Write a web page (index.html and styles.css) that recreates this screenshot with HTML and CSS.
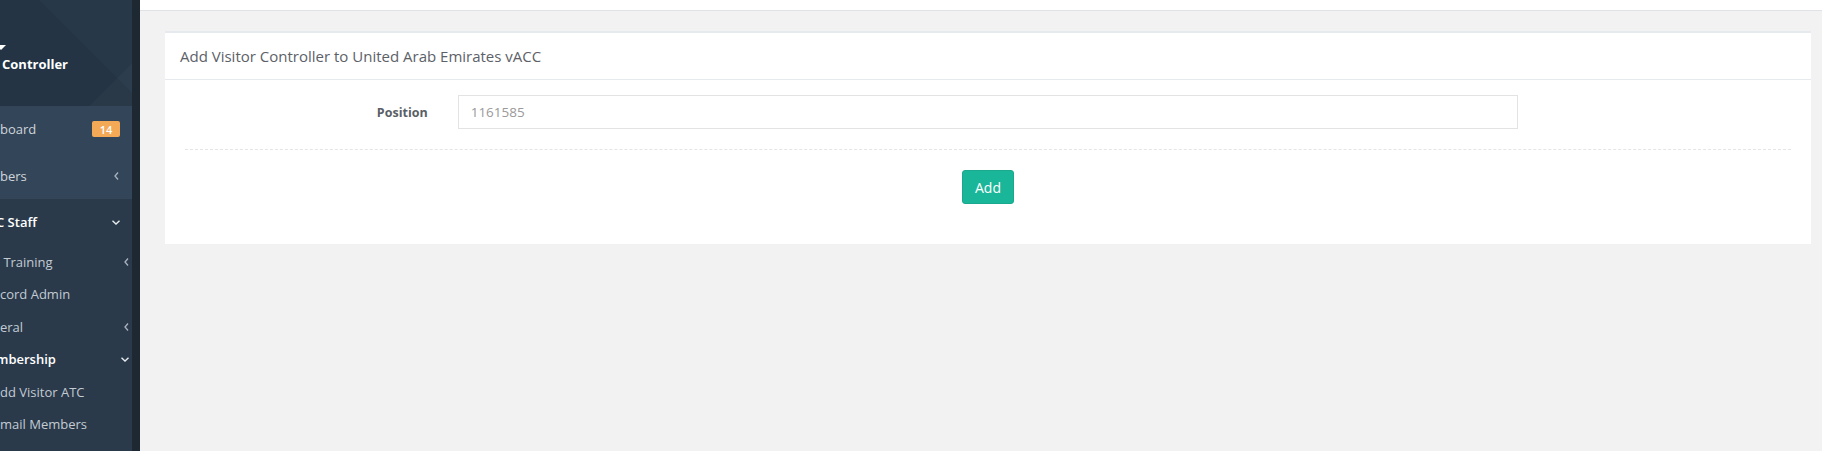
FILE: index.html
```html
<!DOCTYPE html>
<html lang="en">
<head>
<meta charset="utf-8">
<title>Add Visitor Controller</title>
<link rel="stylesheet" href="styles.css">
</head>
<body>
<aside class="sidebar">
  <div class="profile">
    <svg class="profile-caret" width="6" height="5" viewBox="0 0 6 5"><polygon points="-4,0 6,0 1,5" fill="#ffffff"/></svg>
    <div class="profile-name">Controller</div>
  </div>
  <div class="menu-active">
    <div class="menu-row level1">
      <span class="menu-text">board</span>
      <span class="badge">14</span>
    </div>
    <div class="menu-row level1">
      <span class="menu-text">bers</span>
      <svg class="chev-left" width="5" height="8" viewBox="0 0 5 8"><polyline points="4,0.5 1,4 4,7.5" fill="none" stroke="#aab4bf" stroke-width="1.3"/></svg>
    </div>
  </div>
  <div class="menu-row level1 open">
    <span class="menu-text strong cut-c">C Staff</span>
    <svg class="chev-down" width="8" height="5" viewBox="0 0 8 5"><polyline points="0.5,0.8 4,4 7.5,0.8" fill="none" stroke="#e8ecef" stroke-width="1.4"/></svg>
  </div>
  <div class="menu-row level2">
    <span class="menu-text">&nbsp;Training</span>
    <svg class="chev-left" width="5" height="8" viewBox="0 0 5 8"><polyline points="4,0.5 1,4 4,7.5" fill="none" stroke="#aab4bf" stroke-width="1.3"/></svg>
  </div>
  <div class="menu-row level2">
    <span class="menu-text">cord Admin</span>
  </div>
  <div class="menu-row level2">
    <span class="menu-text">eral</span>
    <svg class="chev-left" width="5" height="8" viewBox="0 0 5 8"><polyline points="4,0.5 1,4 4,7.5" fill="none" stroke="#aab4bf" stroke-width="1.3"/></svg>
  </div>
  <div class="menu-row level2">
    <span class="menu-text strong cut-m">mbership</span>
    <svg class="chev-down" width="8" height="5" viewBox="0 0 8 5"><polyline points="0.5,0.8 4,4 7.5,0.8" fill="none" stroke="#e8ecef" stroke-width="1.4"/></svg>
  </div>
  <div class="menu-row level2">
    <span class="menu-text">dd Visitor ATC</span>
  </div>
  <div class="menu-row level2">
    <span class="menu-text">mail Members</span>
  </div>
</aside>
<main class="main">
  <div class="topbar"></div>
  <div class="content">
    <section class="panel">
      <header class="panel-title">Add Visitor Controller to United Arab Emirates vACC</header>
      <form class="panel-body">
        <div class="form-row">
          <label class="form-label" for="position">Position</label>
          <div class="form-field">
            <input id="position" class="form-input" type="text" value="1161585">
          </div>
        </div>
        <div class="divider"></div>
        <div class="form-actions">
          <button type="button" class="btn-success">Add</button>
        </div>
      </form>
    </section>
  </div>
</main>
</body>
</html>
```
FILE: styles.css
```css
* {
  box-sizing: border-box;
}

html, body {
  margin: 0;
  padding: 0;
}

body {
  display: flex;
  width: 1822px;
  height: 451px;
  overflow: hidden;
  font-family: "Open Sans", "Liberation Sans", sans-serif;
  background: #f2f2f2;
}

/* ---------- Sidebar ---------- */
.sidebar {
  width: 140px;
  flex: 0 0 140px;
  height: 451px;
  background: #2a3a4b;
  border-right: 8px solid #1d2833;
  overflow: hidden;
}

.profile {
  height: 106px;
  background:
    linear-gradient(135deg, rgba(255, 255, 255, 0) 82%, rgba(255, 255, 255, 0.025) 82%),
    linear-gradient(45deg, #243444 61%, #273949 61%);
  display: flex;
  flex-direction: column;
  align-items: flex-start;
}

.profile-caret {
  display: block;
  margin-top: 45px;
}

.profile-name {
  margin-top: 5px;
  padding-left: 2px;
  font-size: 13px;
  line-height: 18px;
  font-weight: 700;
  color: #ffffff;
  white-space: nowrap;
}

.menu-active {
  background: #334558;
}

.menu-row {
  display: flex;
  align-items: center;
  justify-content: space-between;
  white-space: nowrap;
  overflow: hidden;
}

.menu-row.level1 {
  height: 46.5px;
  padding-right: 12px;
}

.menu-row.level2 {
  height: 32.5px;
  padding-right: 3px;
}

.menu-text {
  font-size: 13px;
  color: #c3cbd3;
}

.menu-text.strong {
  font-weight: 600;
  color: #ffffff;
}

.menu-text.cut-c {
  margin-left: -4px;
}

.menu-text.cut-m {
  margin-left: -4px;
}

.level1 .menu-text {
  color: #cfd5db;
}

.level1 .menu-text.strong {
  color: #ffffff;
}

.badge {
  display: inline-flex;
  align-items: center;
  justify-content: center;
  width: 28px;
  height: 16px;
  border-radius: 2px;
  background: #f4a957;
  color: #ffffff;
  font-size: 11px;
  font-weight: 600;
  line-height: 1;
}

.chev-left,
.chev-down {
  display: block;
}

.level1 .chev-left {
  margin-right: 1px;
}

/* ---------- Main ---------- */
.main {
  flex: 1;
  display: flex;
  flex-direction: column;
  min-width: 0;
  background: #f2f2f2;
}

.topbar {
  height: 11px;
  background: #ffffff;
  border-bottom: 1px solid #dfe3e7;
}

.content {
  padding: 20px 11px 0 25px;
}

.panel {
  background: #ffffff;
  border-top: 2px solid #e6e9ed;
}

.panel-title {
  height: 47px;
  display: flex;
  align-items: center;
  padding-left: 15px;
  padding-bottom: 1px;
  border-bottom: 1px solid #e6e9ed;
  font-size: 15px;
  color: #5c6168;
}

.panel-body {
  margin: 0;
  padding: 15px 5px 40px;
}

.form-row {
  display: grid;
  grid-template-columns: 2fr 8fr 2fr;
  align-items: center;
}

.form-label {
  padding: 0 15px;
  text-align: right;
  font-size: 12.5px;
  font-weight: 700;
  color: #5a5f66;
}

.form-field {
  padding: 0 15px;
}

.form-input {
  display: block;
  width: 100%;
  height: 34px;
  padding: 0 12px;
  border: 1px solid #e3e3e3;
  border-radius: 0;
  background: #ffffff;
  font-family: "Open Sans", "Liberation Sans", sans-serif;
  font-size: 13.5px;
  color: #9a9a9a;
  outline: none;
}

.divider {
  margin: 20px 15px 0;
  border-top: 1px dashed #e5e5e5;
}

.form-actions {
  display: flex;
  justify-content: center;
  padding-top: 20px;
}

.btn-success {
  height: 34px;
  padding: 0 12px;
  border: 1px solid #1aa98e;
  border-radius: 3px;
  background: #1ab699;
  color: #ffffff;
  font-family: "Open Sans", "Liberation Sans", sans-serif;
  font-size: 14px;
  cursor: pointer;
}
```
